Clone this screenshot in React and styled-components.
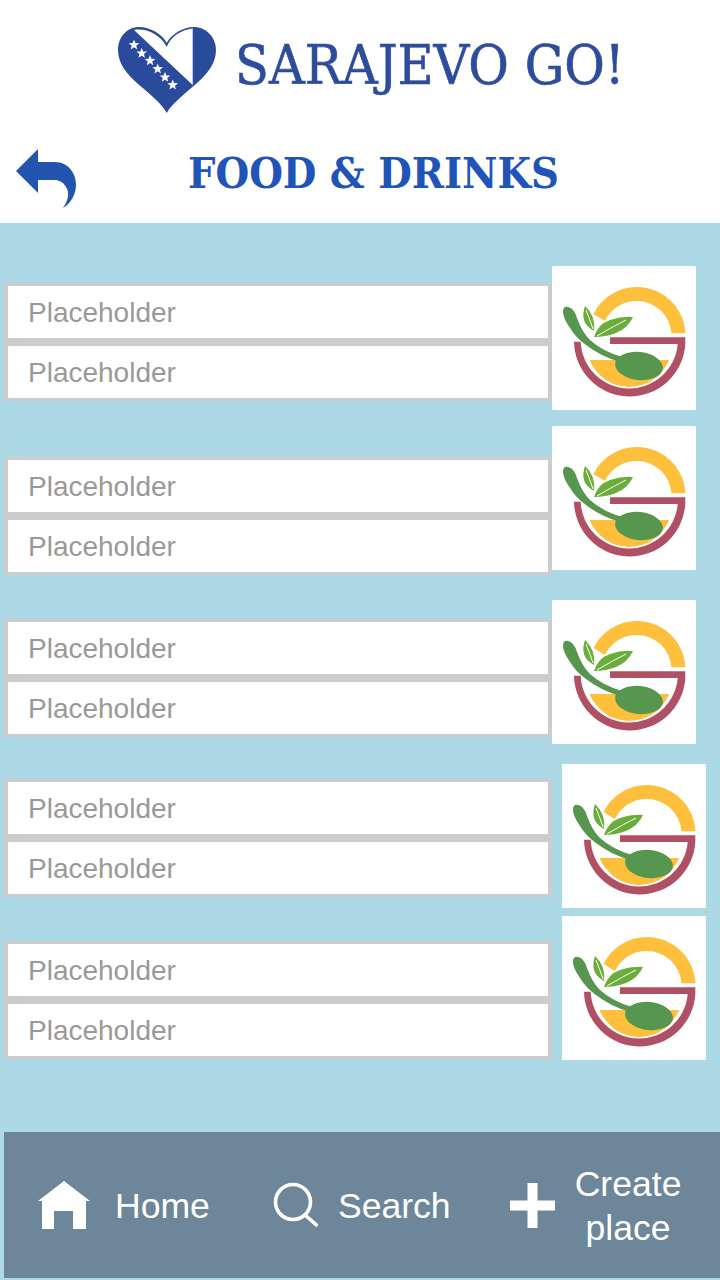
import styled, { createGlobalStyle } from "styled-components"

const GlobalStyle = createGlobalStyle`
  html, body {
    margin: 0;
    padding: 0;
    background: #add8e6;
  }
`

const Page = styled.div`
  width: 720px;
  height: 1280px;
  display: flex;
  flex-direction: column;
  overflow: hidden;
  font-family: "Liberation Sans", Arial, sans-serif;
`
const Header = styled.header`
  height: 223px;
  background: #fff;
  display: flex;
  flex-direction: column;
`
const LogoRow = styled.div`
  height: 130px;
  display: flex;
  align-items: flex-start;
  padding: 26px 0 0 118px;
  box-sizing: border-box;
  gap: 19px;
`
const LogoText = styled.div`
  font-family: "DejaVu Serif Condensed", "DejaVu Serif", serif;
  font-size: 55px;
  line-height: 78px;
  color: #2d4c9c;
  white-space: nowrap;
  -webkit-text-stroke: 0.6px #2d4c9c;
  filter: blur(0.5px);
`
const TitleRow = styled.div`
  display: flex;
  align-items: flex-start;
  padding: 19px 0 0 16px;
`
const Title = styled.h1`
  margin: 0 0 0 112px;
  font-family: "DejaVu Serif Condensed", "DejaVu Serif", serif;
  font-size: 43px;
  line-height: 48px;
  font-weight: 700;
  color: #2054b8;
  white-space: nowrap;
`
const Content = styled.main`
  flex: 1;
  background: #add8e6;
  padding-top: 43px;
`
const Row = styled.div`
  display: flex;
  align-items: flex-start;
  margin-top: ${props => props.$top}px;
  padding-left: 4px;
`
const Fields = styled.div`
  width: 548px;
  box-sizing: border-box;
  margin-top: ${props => props.$offset}px;
  display: flex;
  flex-direction: column;
  gap: 8px;
  padding: 3px 4px;
  background: #ccc;
`
const Field = styled.div`
  height: 52px;
  background: #fff;
  color: #999;
  font-size: 28px;
  line-height: 54px;
  padding-left: 20px;
`
const Thumb = styled.div`
  width: 144px;
  height: 144px;
  background: #fff;
  flex-shrink: 0;
  margin-left: ${props => props.$left}px;
  svg {
    display: block;
  }
`
const Footer = styled.nav`
  height: 146px;
  margin: 0 0 2px 4px;
  background: #6d8699;
  color: #fff;
  display: flex;
  align-items: center;
  padding-left: 34px;
`
const NavItem = styled.div`
  display: flex;
  align-items: center;
  gap: ${props => props.$gap}px;
  margin-right: ${props => props.$after}px;
  font-size: 35.6px;
  line-height: 44px;
`
const NavLabel = styled.span`
  text-align: center;
  margin-top: 2px;
`

const starPoints = (cx, cy, r) => {
  const pts = []
  for (let i = 0; i < 10; i++) {
    const rad = i % 2 === 0 ? r : r * 0.42
    const a = (Math.PI / 5) * i - Math.PI / 2
    pts.push(`${(cx + rad * Math.cos(a)).toFixed(2)},${(cy + rad * Math.sin(a)).toFixed(2)}`)
  }
  return pts.join(" ")
}

const stars = [[16, 19], [23.7, 27.3], [32, 34.7], [39.7, 43], [47, 51.3], [54.7, 59]]

const HeartLogo = () => (
  <svg width="98" height="88" viewBox="0 0 98 88" style={{ filter: "blur(0.4px)" }}>
    <path d="M48.7 16.7C44 8 32 1 21 1C9 1 0 11 0 24C0 38 9 48 20 58C32 68 44 78 48.7 87C54 78 66 68 78 58C89 48 98 38 98 24C98 11 88 1 76 1C65 1 54 8 48.7 16.7Z" fill="#2a4b9b" />
    <path d="M16 4C28 2 42 8 48.7 21C53 10 64 3.5 74.7 2.5V59Z" fill="#fff" />
    {stars.map(([x, y]) => (
      <polygon key={x} points={starPoints(x, y, 5.6)} fill="#fff" />
    ))}
  </svg>
)

const BackArrow = () => (
  <svg width="60" height="60" viewBox="0 0 60 60">
    <path d="M0 22L22 0V13H39C52 13 60 24 60 36C60 46 54 55 47 59C52 52 54 44 50 38C47 33 43 31 39 31H22V44Z" fill="#2355b0" />
  </svg>
)

const FoodLogo = () => (
  <svg width="144" height="144" viewBox="0 0 144 144">
    <path d="M133.4 67.3A48.5 48.5 0 0 0 85 21A48.5 48.5 0 0 0 41.5 48L53 55A34.5 34.5 0 0 1 85 35A34.5 34.5 0 0 1 119.4 67.3Z" fill="#fdbf3c" />
    <path d="M58 71.3H133.3V78A55.7 55.7 0 0 1 22 75.7H28.7A48.6 48.6 0 0 0 125.7 78H58Z" fill="#b05064" />
    <path d="M37.3 94H117.3Q105 120 77 121Q50 120 37.3 94Z" fill="#fdbf3c" />
    <path d="M11 46Q11 40 16 41Q22 42 25 52Q30 66 38 74Q50 85 70 91L68 96Q48 90 34 79Q24 72 18 62Q11 52 11 46Z" fill="#56964f" />
    <ellipse cx="87" cy="100" rx="24" ry="14" transform="rotate(6 87 100)" fill="#56964f" />
    <path d="M33 40Q44 50 42 65Q27 57 33 40Z" fill="#6aad3a" />
    <path d="M34 44Q38 54 41 63" stroke="#fff" strokeWidth="1" fill="none" />
    <path d="M42 71Q46 58 58 54Q70 50 81 51Q76 62 64 67Q54 71 42 71Z" fill="#6aad3a" />
    <path d="M45 70Q58 62 74 54" stroke="#fff" strokeWidth="1" fill="none" />
  </svg>
)

const HomeIcon = () => (
  <svg width="52" height="48" viewBox="0 0 52 48">
    <path d="M26 0L52 20H48V48H35V30H16V48H4V20H0Z" fill="#fff" />
  </svg>
)

const SearchIcon = () => (
  <svg width="48" height="48" viewBox="0 0 48 48">
    <circle cx="23" cy="21" r="17.5" fill="none" stroke="#fff" strokeWidth="3.6" />
    <path d="M35 34L47.5 45" stroke="#fff" strokeWidth="3.6" fill="none" />
  </svg>
)

const PlusIcon = () => (
  <svg width="45" height="45" viewBox="0 0 45 45">
    <path d="M17.5 0H27.5V17.5H45V27.5H27.5V45H17.5V27.5H0V17.5H17.5Z" fill="#fff" />
  </svg>
)

const places = [
  { top: 0, offset: 17, left: 0 },
  { top: 16, offset: 31, left: 0 },
  { top: 25, offset: 19, left: 0 },
  { top: 20, offset: 15, left: 10 },
  { top: 8, offset: 25, left: 10 },
]

const App = () => {
  return (
    <Page>
      <GlobalStyle />
      <Header>
        <LogoRow>
          <HeartLogo />
          <LogoText>SARAJEVO GO!</LogoText>
        </LogoRow>
        <TitleRow>
          <BackArrow />
          <Title>FOOD &amp; DRINKS</Title>
        </TitleRow>
      </Header>
      <Content>
        {places.map((place, i) => (
          <Row key={i} $top={place.top}>
            <Fields $offset={place.offset}>
              <Field>Placeholder</Field>
              <Field>Placeholder</Field>
            </Fields>
            <Thumb $left={place.left}>
              <FoodLogo />
            </Thumb>
          </Row>
        ))}
      </Content>
      <Footer>
        <NavItem $gap={25} $after={60}>
          <HomeIcon />
          <NavLabel>Home</NavLabel>
        </NavItem>
        <NavItem $gap={20} $after={59}>
          <SearchIcon />
          <NavLabel>Search</NavLabel>
        </NavItem>
        <NavItem $gap={20} $after={0}>
          <PlusIcon />
          <NavLabel>Create<br />place</NavLabel>
        </NavItem>
      </Footer>
    </Page>
  )
}

export default App
